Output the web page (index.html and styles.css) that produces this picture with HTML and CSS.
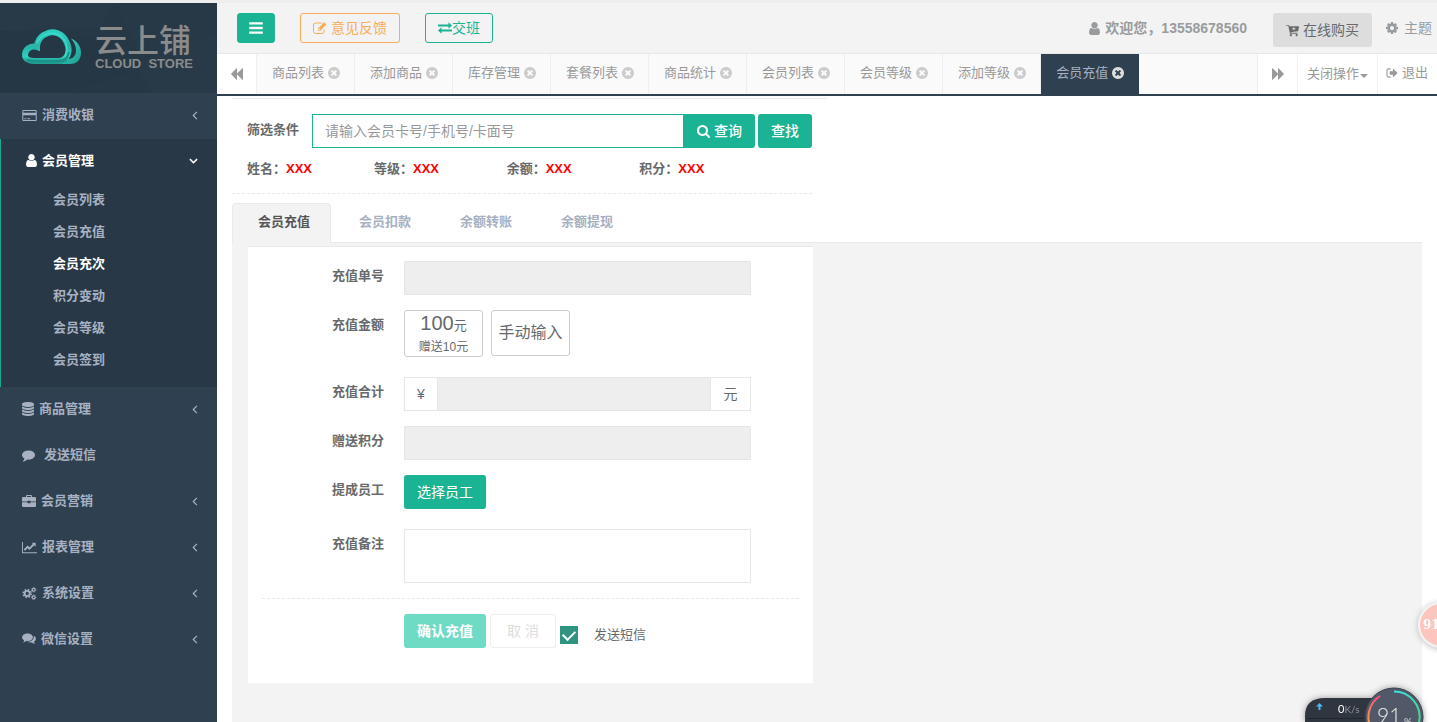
FILE: index.html
```html
<!DOCTYPE html>
<html lang="zh-CN">
<head>
<meta charset="utf-8">
<title>云上铺 - 会员充值</title>
<link rel="stylesheet" href="styles.css">
</head>
<body>
<svg class="sprite" aria-hidden="true">
  <symbol id="i-bars" viewBox="0 0 1792 1792"><path d="M1664 1344v128q0 26-19 45t-45 19h-1408q-26 0-45-19t-19-45v-128q0-26 19-45t45-19h1408q26 0 45 19t19 45zm0-512v128q0 26-19 45t-45 19h-1408q-26 0-45-19t-19-45v-128q0-26 19-45t45-19h1408q26 0 45 19t19 45zm0-512v128q0 26-19 45t-45 19h-1408q-26 0-45-19t-19-45v-128q0-26 19-45t45-19h1408q26 0 45 19t19 45z"/></symbol>
  <symbol id="i-close" viewBox="128 128 1536 1536"><path d="M1277 1122q0-26-19-45l-181-181 181-181q19-19 19-45 0-27-19-46l-90-90q-19-19-46-19-26 0-45 19l-181 181-181-181q-19-19-45-19-27 0-46 19l-90 90q-19 19-19 46 0 26 19 45l181 181-181 181q-19 19-19 45 0 27 19 46l90 90q19 19 46 19 26 0 45-19l181-181 181 181q19 19 45 19 27 0 46-19l90-90q19-19 19-46zm387-226q0 209-103 385.500t-279.500 279.500-385.500 103-385.500-103-279.500-279.500-103-385.500 103-385.500 279.500-279.500 385.500-103 385.500 103 279.500 279.500 103 385.500z"/></symbol>
  <symbol id="i-user" viewBox="128 128 1536 1536"><path d="M1536 1399q0 109-62.500 187t-150.500 78h-854q-88 0-150.500-78t-62.500-187q0-85 8.500-160.500t31.500-152 58.500-131 94-89 134.500-34.500q131 128 313 128t313-128q76 0 134.500 34.500t94 89 58.500 131 31.500 152 8.500 160.500zm-256-887q0 159-112.500 271.500t-271.500 112.500-271.500-112.500-112.500-271.500 112.500-271.500 271.500-112.500 271.500 112.500 112.500 271.500z"/></symbol>
  <symbol id="i-search" viewBox="64 128 1664 1664"><path d="M1216 832q0-185-131.500-316.500t-316.500-131.500-316.500 131.500-131.500 316.500 131.500 316.500 316.500 131.500 316.500-131.500 131.500-316.500zm512 832q0 52-38 90t-90 38q-54 0-90-38l-343-342q-179 124-399 124-143 0-273.500-55.500t-225-150-150-225-55.500-273.500 55.500-273.500 150-225 225-150 273.500-55.500 273.500 55.500 225 150 150 225 55.500 273.500q0 220-124 399l343 343q37 37 37 90z"/></symbol>
  <symbol id="i-cog" viewBox="128 128 1536 1536"><path d="M1152 896q0-106-75-181t-181-75-181 75-75 181 75 181 181 75 181-75 75-181zm512-109v222q0 12-8 23t-20 13l-185 28q-19 54-39 91 35 50 107 138 10 12 10 25t-9 23q-27 37-99 108t-94 71q-12 0-26-9l-138-108q-44 23-91 38-16 136-29 186-7 28-36 28h-222q-14 0-24.500-8.500t-11.500-21.500l-28-184q-49-16-90-37l-141 107q-10 9-25 9-14 0-25-11-126-114-165-168-7-10-7-23 0-12 8-23 15-21 51-66.500t54-70.500q-27-50-41-99l-183-27q-13-2-21-12.500t-8-23.500v-222q0-12 8-23t19-13l186-28q14-46 39-92-40-57-107-138-10-12-10-24 0-10 9-23 26-36 98.500-107.500t94.500-71.500q13 0 26 10l138 107q44-23 91-38 16-136 29-186 7-28 36-28h222q14 0 24.500 8.500t11.500 21.500l28 184q49 16 90 37l142-107q9-9 24-9 13 0 25 10 129 119 165 170 7 8 7 22 0 12-8 23-15 21-51 66.500t-54 70.500q26 50 41 98l183 28q13 2 21 12.500t8 23.500z"/></symbol>
  <symbol id="i-cogs" viewBox="0 0 15 14"><circle cx="5" cy="7" r="2.800" fill="none" stroke="currentColor" stroke-width="2"/><circle cx="5" cy="7" r="4.300" fill="none" stroke="currentColor" stroke-width="1.600" stroke-dasharray="1.700 1.680"/><circle cx="12" cy="3" r="1.500" fill="none" stroke="currentColor" stroke-width="1.200"/><circle cx="12" cy="3" r="2.400" fill="none" stroke="currentColor" stroke-dasharray="1 .88"/><circle cx="12" cy="11" r="1.500" fill="none" stroke="currentColor" stroke-width="1.200"/><circle cx="12" cy="11" r="2.400" fill="none" stroke="currentColor" stroke-dasharray="1 .88"/></symbol>
  <symbol id="i-comment" viewBox="0 128 1792 1664"><path d="M1792 896q0 174-120 321.500t-326 233-450 85.500q-70 0-145-8-198 175-460 242-49 14-114 22-17 2-30.500-9t-17.500-29v-1q-3-4-.5-12t2-10 4.500-9.500l6-9 7-8.500 8-9q7-8 31-34.500t34.500-38 31-39.500 32.500-51 27-59 26-76q-157-89-247.500-220t-90.500-281q0-130 71-248.500t191-204.500 286-136.500 348-50.500 348 50.500 286 136.500 191 204.500 71 248.500z"/></symbol>
  <symbol id="i-comments" viewBox="0 0 14 12"><path d="M5.500.5c3 0 5.400 1.700 5.400 3.800S8.500 8.100 5.500 8.100l-1.300-.1C3.200 8.800 2 9.300.9 9.400c.7-.7 1.100-1.300 1.300-2C.9 6.700.1 5.600.1 4.300.1 2.200 2.500.5 5.500.5z"/><path d="M11.700 2.800c1.400.7 2.200 1.700 2.200 3 0 1.200-.8 2.300-2 3 .2.700.6 1.300 1.300 2-1.200-.1-2.300-.6-3.300-1.400-1.700.3-3.500 0-4.700-.6 4 .2 7.300-2.300 6.500-6z"/></symbol>
  <symbol id="i-card" viewBox="0 0 15 12"><path fill-rule="evenodd" d="M1.300.4h12.400q1 0 1 1v9.200q0 1-1 1H1.300q-1 0-1-1V1.400q0-1 1-1zm0 1v1.900h12.400V1.400zm0 4.400v4.800h12.400V5.800zM2.300 8.700h2v1h-2zm3 0h3v1h-3z"/></symbol>
  <symbol id="i-db" viewBox="0 0 12 14"><path d="M6 0c3.300 0 6 .9 6 2v1c0 1.100-2.700 2-6 2S0 4.100 0 3V2C0 .9 2.700 0 6 0zM0 4.600C1.200 5.500 3.500 6 6 6s4.800-.5 6-1.400V6c0 1.100-2.700 2-6 2S0 7.100 0 6zm0 3C1.200 8.500 3.500 9 6 9s4.800-.5 6-1.400V9c0 1.100-2.700 2-6 2s-6-.9-6-2zm0 3c1.200.9 3.500 1.400 6 1.400s4.800-.5 6-1.400V12c0 1.100-2.700 2-6 2s-6-.9-6-2z"/></symbol>
  <symbol id="i-case" viewBox="0 0 14 12"><path fill-rule="evenodd" d="M4 2V.9Q4 0 4.900 0h4.200Q10 0 10 .9V2h2.800Q14 2 14 3.200V6.500H8.500v-.7h-3v.7H0V3.200Q0 2 1.200 2zm1 0h4V1H5zM0 7.200h5.500v1.100h3V7.200H14v3.600q0 1.200-1.200 1.200H1.200Q0 12 0 10.800z"/></symbol>
  <symbol id="i-chart" viewBox="0 0 16 12"><path d="M0 0h1v11h15v1H0z"/><path d="M2.500 8.800 6 5.200l2 2 4.500-4.600" fill="none" stroke="currentColor" stroke-width="2"/><path d="M10.400 1H14.500v4.100z"/></symbol>
  <symbol id="i-edit" viewBox="0 0 14 13"><path d="M9 1.500H2.500q-2 0-2 2v6.500q0 2 2 2H9q2 0 2-2V8" fill="none" stroke="currentColor"/><path fill-rule="evenodd" d="m11.200.8 2.200 2.200L7.300 9.200H5V7zM5.700 7.300v1.200h1.200l.4-.4-1.200-1.200z"/></symbol>
  <symbol id="i-exchange" viewBox="0 0 14 12"><path d="M0 2.600h10.500V.3L14 3.500l-3.500 3.200V4.400H0zM14 7.600H3.500V5.300L0 8.500l3.500 3.200V9.400H14z"/></symbol>
  <symbol id="i-back" viewBox="0 0 12 12"><path d="M6 .5v5L11.500.3q.5-.3.500.3v10.800q0 .6-.5.300L6 6.500v5q0 .5-.5.200L.2 6.300q-.3-.3 0-.6L5.500.3Q6 0 6 .5z"/></symbol>
  <symbol id="i-cart" viewBox="0 0 14 13"><path fill-rule="evenodd" d="M.5.500h2.300q.5 0 .6.500l.2 1H13.500q.5 0 .5.600l-.8 4.200q-.1.400-.5.400L4.900 8.300l.2.700H12q.5 0 .5.500T12 10H4.500q-.5 0-.4-.7L2.400 1.500H.5Q0 1.500 0 1T.5.500zM8 3v1.200H6.800v.9H8v1.200h.9V5.100h1.200v-.9H8.900V3z"/><circle cx="5.200" cy="11.600" r="1.200"/><circle cx="11.500" cy="11.600" r="1.200"/></symbol>
  <symbol id="i-exit" viewBox="0 0 13 12"><path d="M5 1.500H3q-2 0-2 2v5q0 2 2 2h2" fill="none" stroke="currentColor" stroke-width="1.200"/><path d="M7.500 1.200 12.600 6l-5.100 4.800V8H4V4h3.500z"/></symbol>
  <symbol id="i-left" viewBox="0 0 6 9"><path d="M4.900.9 1.300 4.500l3.600 3.600" fill="none" stroke="currentColor" stroke-width="1.200"/></symbol>
  <symbol id="i-down" viewBox="0 0 9 6"><path d="M.9 1.100 4.500 4.600l3.600-3.500" fill="none" stroke="currentColor" stroke-width="1.500"/></symbol>
</svg>

<div class="app">
  <aside class="sidebar">
    <div class="brand">
      <svg class="brand-facets" viewBox="0 0 217 90" preserveAspectRatio="none" aria-hidden="true"><path d="M0 0h115L100 25 0 28z" fill="#283a48"/><path d="M115 0h102v40L140 55z" fill="#273947"/><path d="M0 28 100 36 128 70 60 90H0z" fill="#253645"/><path d="m135 60 82-30v60h-65z" fill="#283a48"/></svg>
      <svg class="cloud" viewBox="0 0 60 36" aria-hidden="true">
        <defs>
          <linearGradient id="cl" x1="0" y1="0" x2="0" y2="1"><stop offset="0" stop-color="#2fcdbf"/><stop offset=".5" stop-color="#27b5a8"/><stop offset=".85" stop-color="#30cfc0"/><stop offset="1" stop-color="#1f9e92"/></linearGradient>
          <linearGradient id="cr" x1="0" y1="0" x2="1" y2="1"><stop offset="0" stop-color="#38dccb"/><stop offset="1" stop-color="#1f9d91"/></linearGradient>
        </defs>
        <path d="M49 9.500c6 2 10 8 10 14 0 7-4 11.500-11 11.500H34l5-5h8c5-1 7-4 7-9 0-4-2-8-5-11.500z" fill="url(#cr)"/>
        <path d="M12 32H36C45 32 49 23 45 14 41 4 31 1 24 5c-6 2-9 8-9 13-6-2-12 2-12 8 0 4 4 6 9 6z" fill="none" stroke="url(#cl)" stroke-width="6"/>
        <path d="M15 14C19 5 29 2 37 6c7 4 10 12 6 22" fill="none" stroke="#3adccc" stroke-width="1.500"/>
        <path d="M5 31c8 2 20 1 32 1 6 0 9-4 10-9" fill="none" stroke="#1c9186" stroke-width="2"/>
      </svg>
      <div class="brand-text"><span class="brand-cn">云上铺</span><span class="brand-en">CLOUD&nbsp; STORE</span></div>
    </div>
    <nav class="menu">
      <a class="item" href="#"><svg class="w15"><use href="#i-card"/></svg>消费收银<svg class="arrow"><use href="#i-left"/></svg></a>
      <div class="open">
        <a class="item" href="#"><svg class="w13"><use href="#i-user"/></svg>会员管理<svg class="arrow-down"><use href="#i-down"/></svg></a>
        <div class="sub">
          <a href="#">会员列表</a><a href="#">会员充值</a><a class="current" href="#">会员充次</a><a href="#">积分变动</a><a href="#">会员等级</a><a href="#">会员签到</a>
        </div>
      </div>
      <a class="item" href="#"><svg class="w12 tall"><use href="#i-db"/></svg>商品管理<svg class="arrow"><use href="#i-left"/></svg></a>
      <a class="item wide" href="#"><svg class="w13"><use href="#i-comment"/></svg>发送短信</a>
      <a class="item" href="#"><svg class="w14"><use href="#i-case"/></svg>会员营销<svg class="arrow"><use href="#i-left"/></svg></a>
      <a class="item" href="#"><svg class="w15"><use href="#i-chart"/></svg>报表管理<svg class="arrow"><use href="#i-left"/></svg></a>
      <a class="item" href="#"><svg class="w15"><use href="#i-cogs"/></svg>系统设置<svg class="arrow"><use href="#i-left"/></svg></a>
      <a class="item" href="#"><svg class="w14"><use href="#i-comments"/></svg>微信设置<svg class="arrow"><use href="#i-left"/></svg></a>
    </nav>
  </aside>

  <main class="main">
    <header class="topbar">
      <button class="btn-s solid" aria-label="菜单"><svg class="w16"><use href="#i-bars"/></svg></button>
      <button class="btn-s orange"><svg class="w14"><use href="#i-edit"/></svg>意见反馈</button>
      <button class="btn-s green"><svg class="w14"><use href="#i-exchange"/></svg>交班</button>
      <div class="right">
        <span class="welcome"><svg class="w13"><use href="#i-user"/></svg>欢迎您，13558678560</span>
        <button class="buy"><svg class="w13"><use href="#i-cart"/></svg>在线购买</button>
        <a class="theme" href="#"><svg class="w12"><use href="#i-cog"/></svg>主题</a>
      </div>
    </header>
    <div class="tabs">
      <button class="step" aria-label="向左"><svg class="w12"><use href="#i-back"/></svg></button>
      <nav class="tablist">
        <a href="#">商品列表<svg class="w12"><use href="#i-close"/></svg></a>
        <a href="#">添加商品<svg class="w12"><use href="#i-close"/></svg></a>
        <a href="#">库存管理<svg class="w12"><use href="#i-close"/></svg></a>
        <a href="#">套餐列表<svg class="w12"><use href="#i-close"/></svg></a>
        <a href="#">商品统计<svg class="w12"><use href="#i-close"/></svg></a>
        <a href="#">会员列表<svg class="w12"><use href="#i-close"/></svg></a>
        <a href="#">会员等级<svg class="w12"><use href="#i-close"/></svg></a>
        <a href="#">添加等级<svg class="w12"><use href="#i-close"/></svg></a>
        <a class="active" href="#">会员充值<svg class="w12"><use href="#i-close"/></svg></a>
      </nav>
      <button class="step next" aria-label="向右"><svg class="w12"><use href="#i-back"/></svg></button>
      <button class="ops">关闭操作<span class="caret"></span></button>
      <a class="exit" href="#"><svg class="w12"><use href="#i-exit"/></svg>退出</a>
    </div>

    <div class="content">
      <section class="filter">
        <div class="search">
          <label for="kw">筛选条件</label>
          <input id="kw" type="text" placeholder="请输入会员卡号/手机号/卡面号">
          <button class="btn query"><svg class="w13"><use href="#i-search"/></svg>查询</button>
          <button class="btn find">查找</button>
        </div>
        <div class="info">
          <span>姓名<i>：</i><b>XXX</b></span><span>等级<i>：</i><b>XXX</b></span><span>余额<i>：</i><b>XXX</b></span><span>积分<i>：</i><b>XXX</b></span>
        </div>
      </section>
      <nav class="subtabs">
        <a class="active" href="#">会员充值</a><a href="#">会员扣款</a><a href="#">余额转账</a><a href="#">余额提现</a>
      </nav>
      <section class="panel">
        <form class="card">
          <div class="row"><label for="no">充值单号</label><input id="no" class="field" type="text" disabled></div>
          <div class="row amount"><span class="lab">充值金额</span>
            <div class="choices">
              <button type="button" class="choice"><span class="sum"><span class="big">100</span>元</span><span class="gift">赠送10元</span></button>
              <button type="button" class="choice manual">手动输入</button>
            </div>
          </div>
          <div class="row"><label for="total">充值合计</label>
            <div class="group"><span class="yen">¥</span><input id="total" class="field" type="text" disabled><span class="unit">元</span></div>
          </div>
          <div class="row"><label for="pts">赠送积分</label><input id="pts" class="field" type="text" disabled></div>
          <div class="row staff"><span class="lab">提成员工</span><button type="button" class="btn pick">选择员工</button></div>
          <div class="row"><label for="memo">充值备注</label><textarea id="memo" class="memo"></textarea></div>
          <div class="actions">
            <button type="button" class="btn confirm">确认充值</button>
            <button type="button" class="btn cancel">取 消</button>
            <label class="sms"><input type="checkbox" checked>发送短信</label>
          </div>
        </form>
      </section>
    </div>
  </main>
</div>

<div class="bubble">91</div>
<div class="meter">
  <svg viewBox="0 0 132 44" aria-hidden="true">
    <defs><linearGradient id="g1" x1="0" y1="0" x2="0" y2="1"><stop offset="0" stop-color="#ff4d7d"/><stop offset="1" stop-color="#ff9c45"/></linearGradient><linearGradient id="g2" x1="0" y1="0" x2="1" y2="1"><stop offset="0" stop-color="#3fe0e0"/><stop offset="1" stop-color="#4fd08c"/></linearGradient></defs>
    <path class="pill" d="M0 44V38Q0 20 20 20H100V44z"/>
    <path d="M2 40.500h70" stroke="#20262e"/>
    <path d="m14.500 25-3.500 3.500h2.500V32h2v-3.500H18z" fill="#4db8ee"/>
    <text x="33" y="35" class="speed">0<tspan class="dim">K/s</tspan></text>
    <circle class="disc" cx="89" cy="39" r="29"/>
    <path d="M89 13.500a25.500 25.500 0 0 1 25 31" fill="none" stroke="url(#g2)" stroke-width="2"/>
    <path d="M75 18a25.500 25.500 0 0 0-11 27" fill="none" stroke="url(#g1)" stroke-width="2"/>
    <text x="72" y="45" class="pct">91</text><text x="99" y="47" class="sign">%</text>
  </svg>
</div>
</body>
</html>
```
FILE: styles.css
```css
* { box-sizing: border-box; }
body {
  margin: 0;
  background: #eee;
  color: #676a6c;
  font-family: "Liberation Sans", "Noto Sans CJK SC", sans-serif;
  font-size: 13px;
  line-height: 20px;
  overflow: hidden;
}
a { color: inherit; text-decoration: none; }
button, input, textarea { font: inherit; color: inherit; margin: 0; }
button { cursor: pointer; padding: 0; background: none; border: 0; white-space: nowrap; }
svg { fill: currentColor; flex: none; }
.sprite { display: none; }
.w12 { width: 12px; height: 12px; }
.w13 { width: 13px; height: 13px; }
.w14 { width: 14px; height: 14px; }
.w15 { width: 15px; height: 13px; }
.w16 { width: 16px; height: 16px; }
.tall { height: 14px; }

.app { display: flex; height: 100vh; padding-top: 3px; }

/* sidebar */
.sidebar { flex: none; width: 217px; background: #2f4050; color: #a7b1c2; font-weight: 700; overflow: hidden; }
.brand { position: relative; height: 90px; background: #263846; display: flex; align-items: flex-start; padding: 22px 0 0 22px; }
.brand-facets { position: absolute; inset: 0; width: 100%; height: 100%; }
.cloud { position: relative; width: 60px; height: 36px; margin-top: 4px; }
.brand-text { position: relative; margin-left: 13px; color: #8b8b8b; display: flex; flex-direction: column; }
.brand-cn { font-size: 32px; line-height: 32px; font-weight: 500; }
.brand-en { font-size: 13px; line-height: 14px; }
.item { display: flex; align-items: center; gap: 5px; height: 46px; padding: 0 19px 2px 22px; }
.item.wide { gap: 9px; }
.arrow { width: 6px; height: 9px; margin-left: auto; }
.arrow-down { width: 9px; height: 6px; margin-left: auto; }
.open { background: #293846; border-left: 1px solid #19aa8d; padding-bottom: 11px; }
.open .item { color: #fff; height: 45px; gap: 4px; padding-left: 24px; }
.sub { display: flex; flex-direction: column; }
.sub a { padding: 6px 0 6px 52px; }
.sub .current { color: #fff; }

/* top bar */
.main { flex: 1; min-width: 0; background: #fff; display: flex; flex-direction: column; }
.topbar { display: flex; align-items: flex-start; gap: 25px; height: 51px; padding: 10px 5px 0 20px; background: #f3f3f3; border-bottom: 1px solid #e7e7e7; font-size: 14px; }
.btn-s { display: flex; align-items: center; justify-content: center; gap: 4px; height: 30px; padding: 0 12px; border: 1px solid; border-radius: 3px; }
.solid { background: #1ab394; border-color: #1ab394; padding: 0 10px; }
.solid svg { color: #fff; }
.orange { color: #f8ac59; }
.green { color: #1ab394; gap: 0; }
.right { display: flex; margin-left: auto; color: #999c9e; white-space: nowrap; }
.welcome { display: flex; align-items: center; gap: 4px; height: 30px; font-weight: 700; }
.buy { display: flex; align-items: center; gap: 4px; height: 34px; padding: 0 13px; margin: 0 14px 0 26px; background: #ddd; border-radius: 3px; color: #676a6c; }
.theme { display: flex; align-items: center; gap: 6px; height: 30px; }

/* page tabs */
.tabs { display: flex; height: 42px; border-bottom: 2px solid #2f4050; background: #fafafa; color: #999; }
.step { display: flex; align-items: center; justify-content: center; width: 40px; background: #fff; border-right: 1px solid #eee; }
.next { border-left: 1px solid #eee; width: 41px; }
.next svg { transform: scaleX(-1); }
.tablist { display: flex; flex: 1; min-width: 0; overflow: hidden; }
.tablist a { display: flex; align-items: center; gap: 4px; padding: 0 14px 2px 15px; border-right: 1px solid #eee; white-space: nowrap; }
.tablist svg { color: #ccc; }
.tablist .active { background: #2f4050; color: #a7b1c2; border-color: #2f4050; }
.tablist .active svg { color: #ddd; }
.ops { display: flex; align-items: center; gap: 1px; width: 80px; padding-left: 9px; background: #fff; border-right: 1px solid #eee; }
.caret { border: 4px solid transparent; border-top-color: currentColor; border-bottom: 0; margin-top: 4px; }
.exit { display: flex; align-items: center; gap: 4px; width: 59px; padding: 0 0 2px 8px; background: #fff; }

/* content */
.content { flex: 1; min-height: 0; display: flex; flex-direction: column; padding: 2px 15px 0; overflow: hidden; }
.filter { width: 50%; border-top: 1px solid #e7eaec; padding: 15px 15px 0 0; font-weight: 700; }
.search { display: flex; }
.search label { width: 80px; padding: 6px 0 0 15px; flex: none; }
.search input { flex: 1; min-width: 0; height: 34px; padding: 0 12px; border: 1px solid #1ab394; background: #fff; font-size: 14px; font-weight: 400; outline: 0; }
.search input::placeholder { color: #999; opacity: 1; }
.btn { height: 34px; border-radius: 3px; background: #1ab394; color: #fff; font-size: 14px; font-weight: 400; }
.query { display: flex; align-items: center; justify-content: center; gap: 4px; width: 71px; border-radius: 0 3px 3px 0; font-weight: 500; }
.find { width: 54px; margin-left: 3px; font-weight: 500; }
.info { display: grid; grid-template-columns: 127px 1fr 1fr 1fr; padding: 11px 40px 14px 15px; border-bottom: 1px dashed #e7eaec; }
.info i { font-style: normal; font-family: "Noto Sans CJK TC", sans-serif; line-height: 1; }
.info b { color: #f00; }
.subtabs { display: flex; gap: 2px; margin-top: 9px; border-bottom: 1px solid #e7eaec; font-weight: 700; color: #a7b1c2; }
.subtabs a { padding: 8px 20px 10px 25px; border: 1px solid transparent; border-bottom: 0; border-radius: 4px 4px 0 0; }
.subtabs .active { color: #555; background: #f3f3f3; border-color: #e7eaec; margin-bottom: -1px; padding-bottom: 11px; }
.panel { flex: 1; background: #f3f3f3; padding-top: 3px; }
.card { width: calc(50% - 30px); margin-left: 16px; padding: 14px 14px 35px; background: #fff; border-top: 1px solid #e7eaec; }
.row { display: grid; grid-template-columns: 122px 1fr; column-gap: 20px; align-items: start; margin-bottom: 15px; padding-right: 48px; }
.row > label, .lab { text-align: right; font-weight: 700; padding-top: 5px; }
.field { width: 100%; min-width: 0; height: 34px; border: 1px solid #e5e6e7; border-radius: 1px; background: #eee; }
.amount, .staff { margin-bottom: 20px; }
.choices { display: flex; align-items: flex-start; gap: 8px; }
.choice { width: 79px; height: 47px; border: 1px solid #ccc; border-radius: 3px; display: flex; flex-direction: column; align-items: center; justify-content: center; }
.sum { line-height: 24px; }
.big { font-size: 20px; }
.gift { font-size: 12px; line-height: 18px; }
.manual { height: 46px; font-size: 16px; }
.group { display: flex; }
.group span { flex: none; height: 34px; border: 1px solid #e5e6e7; text-align: center; line-height: 32px; font-size: 14px; }
.yen { width: 33px; border-right: 0 !important; }
.unit { width: 40px; border-left: 0 !important; }
.pick { width: 82px; }
.memo { display: block; width: 100%; height: 54px; border: 1px solid #e5e6e7; border-radius: 1px; background: #fff; resize: none; }
.actions { display: flex; gap: 4px; border-top: 1px dashed #e7eaec; padding: 15px 0 0 142px; }
.confirm { width: 82px; background: #70dbc5; font-weight: 700; }
.cancel { width: 66px; background: #fff; border: 1px solid #eee; color: #ddd; }
.sms { display: flex; align-items: center; gap: 16px; height: 34px; padding-top: 8px; }
.sms input { appearance: none; width: 18px; height: 18px; background: #319480; display: grid; place-items: center; }
.sms input::after { content: ""; width: 6px; height: 10px; border: solid #fff; border-width: 0 2px 2px 0; transform: translateY(-1px) rotate(45deg); }

/* floating widgets */
.bubble { position: fixed; right: -27px; top: 602px; width: 46px; height: 46px; padding-left: 3px; border: 2px solid #f4f4f4; border-radius: 50%; background: #fcc5be; color: #fff; font: 700 12px/42px "DejaVu Serif", serif; box-shadow: 0 1px 6px #bbb; }
.meter { position: fixed; right: 0; bottom: 0; width: 132px; height: 44px; }
.meter svg { display: block; width: 132px; height: 44px; overflow: visible; filter: drop-shadow(0 0 3px #999); }
.pill { fill: #303640; }
.disc { fill: #515867; stroke: #3c424e; }
.speed { fill: #fff; font: 11px Lato, sans-serif; }
.dim { fill: #8d939d; font-size: 10px; }
.pct { fill: #eee; font: 300 21px Lato, sans-serif; }
.sign { fill: #ddd; font: 10px Lato, sans-serif; }
```
